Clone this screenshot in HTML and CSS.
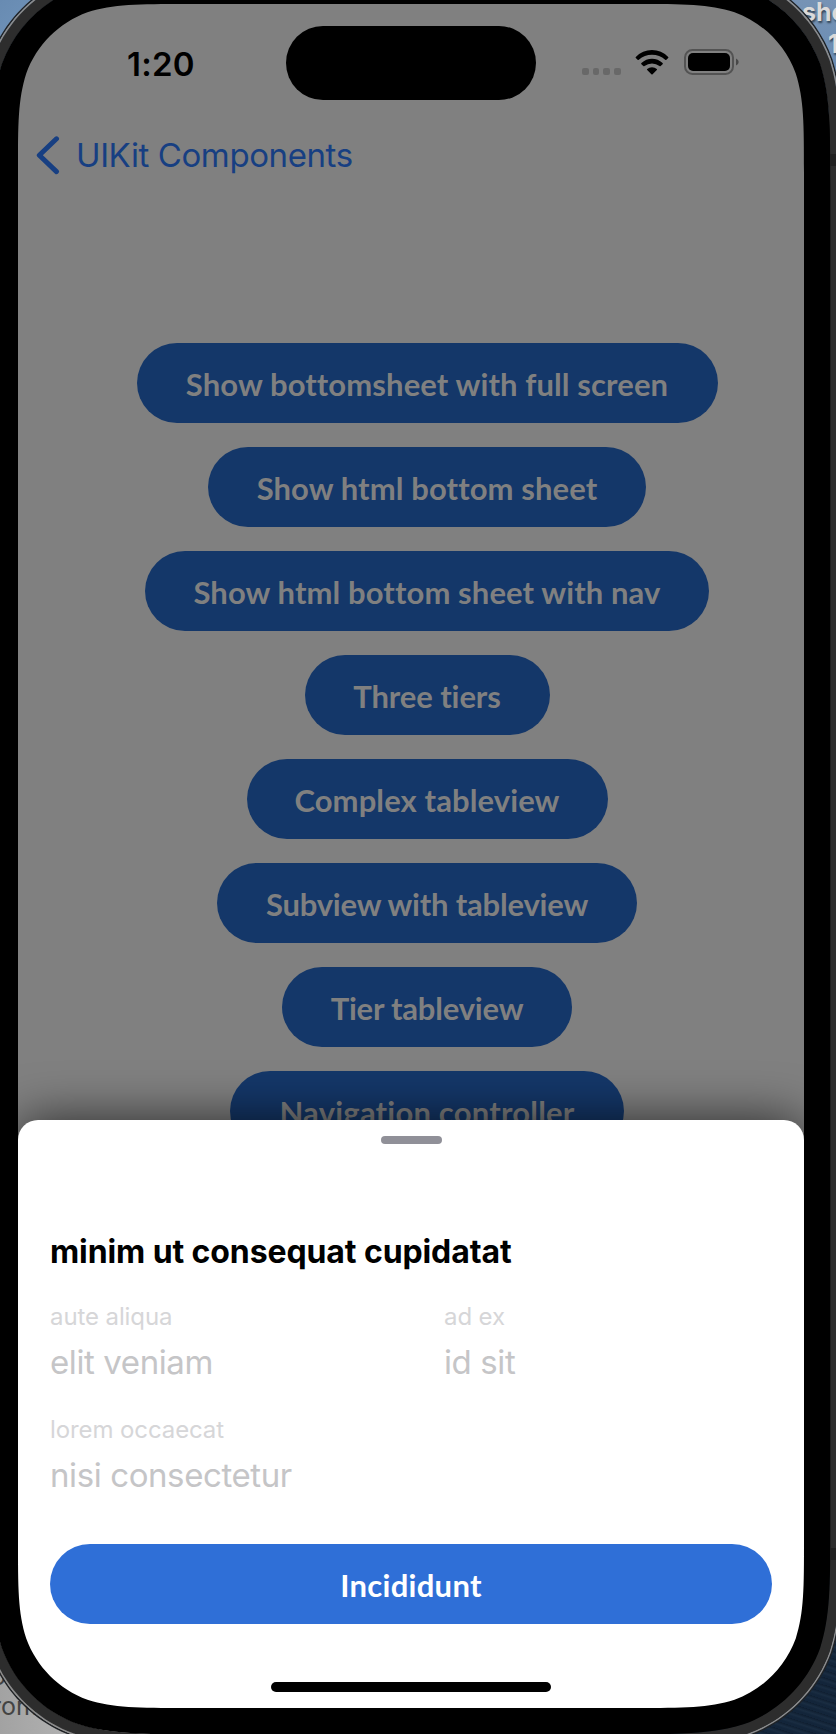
FILE: index.html
```
<!DOCTYPE html>
<html lang="en">
<head>
<meta charset="utf-8">
<title>UIKit Components</title>
<link rel="stylesheet" href="styles.css">
</head>
<body>
<main class="desktop">
  <span class="desk-text desk-shot">sho</span>
  <span class="desk-text desk-number">1</span>
  <span class="desk-text desk-left-top">o</span>
  <span class="desk-text desk-left-bottom">rom.</span>
  <section class="screen">
    <header class="status">
      <time class="clock">1:20</time>
      <div class="island"></div>
      <div class="indicators">
        <div class="dots"><i></i><i></i><i></i><i></i></div>
        <svg class="wifi" viewBox="0 0 34 25" width="34" height="25">
          <path d="M.8 6.9Q7.5 0 17 0T33.2 6.9Q33.7 7.5 33.2 8L31.4 9.8Q30.8 10.3 30.2 9.8Q24.5 4.8 17 4.8T3.8 9.8Q3.2 10.3 2.6 9.8L.8 8Q.3 7.5.8 6.9Z"/>
          <path d="M6.4 13.1Q11 8.8 17 8.8T27.6 13.1Q28.2 13.7 27.6 14.3L25.7 16Q25.1 16.5 24.5 16Q21.2 13.4 17 13.4T9.5 16Q8.9 16.5 8.3 16L6.4 14.3Q5.8 13.7 6.4 13.1Z"/>
          <path d="M12.2 19Q14.2 17.3 17 17.3T21.8 19Q22.4 19.5 21.8 20.1L17.6 24.3Q17 24.8 16.4 24.3L12.2 20.1Q11.6 19.5 12.2 19Z"/>
        </svg>
        <svg class="battery" viewBox="0 0 55 26" width="55" height="26">
          <rect x="1" y="1" width="48" height="24" rx="7.5" fill="none" stroke="#535353" stroke-width="2"/>
          <rect x="4" y="4" width="42" height="18" rx="5" fill="#000"/>
          <path d="M52 9.5Q54.7 10.5 54.7 13T52 16.5Z" fill="#484848"/>
        </svg>
      </div>
    </header>
    <nav class="nav">
      <svg viewBox="0 0 28 40" width="28" height="40"><path d="M22.5 2.8L5.3 19.2L22.5 35.6" fill="none" stroke="#173f82" stroke-width="5" stroke-linecap="round" stroke-linejoin="round"/></svg>
      <span class="back">UIKit Components</span>
    </nav>
    <div class="actions">
      <button class="pill w1">Show bottomsheet with full screen</button>
      <button class="pill w2">Show html bottom sheet</button>
      <button class="pill w3">Show html bottom sheet with nav</button>
      <button class="pill w4">Three tiers</button>
      <button class="pill w5">Complex tableview</button>
      <button class="pill w6">Subview with tableview</button>
      <button class="pill w7">Tier tableview</button>
      <button class="pill w8">Navigation controller</button>
    </div>
    <section class="sheet">
      <div class="grabber"></div>
      <h1 class="title">minim ut consequat cupidatat</h1>
      <dl class="fields">
        <div class="field"><dt>aute aliqua</dt><dd>elit veniam</dd></div>
        <div class="field"><dt>ad ex</dt><dd>id sit</dd></div>
        <div class="field"><dt>lorem occaecat</dt><dd>nisi consectetur</dd></div>
      </dl>
      <button class="primary">Incididunt</button>
      <div class="home"></div>
    </section>
  </section>
  <svg class="bezel" viewBox="0 0 836 1734" width="836" height="1734">
    <g id="frame"></g>
  </svg>
</main>
<script src="frame.js"></script>
</body>
</html>
```
FILE: frame.js
```
// Builds the phone frame from nested continuous-corner rectangles.
const C = [[1.528665, 0], [1.088493, 0], [0.868407, 0], [0.631494, 0.074911],
  [0.372824, 0.169059], [0.16906, 0.372824], [0.074911, 0.631494],
  [0, 0.868407], [0, 1.088493], [0, 1.528665]];

function roundedPath(l, t, r, b, radius) {
  const corner = (x, y, sx, sy, reverse) => {
    const pts = C.map(([a, c]) => `${x + sx * a * radius} ${y + sy * c * radius}`);
    if (reverse) pts.reverse();
    return pts[0] + 'C' + pts.slice(1).join(' ');
  };
  return 'M' + corner(l, t, 1, 1, false) + 'L' + corner(l, b, 1, -1, true) +
    'L' + corner(r, b, -1, -1, false) + 'L' + corner(r, t, -1, 1, true) + 'Z';
}

const inset = (d) => roundedPath(18 - d, 4 - d, 804 + d, 1708 + d, 110 + d);
const ring = (outer, inner, color) =>
  `<path fill-rule="evenodd" fill="${color}" d="${inset(outer)}${inset(inner)}"/>`;

document.getElementById('frame').innerHTML =
  ring(39.5, 38, '#202326') + ring(38, 36.3, '#8c8c8c') +
  ring(36.5, 26, '#2d2d2d') + ring(26.3, 0, '#000') +
  '<path fill="#202020" d="M830 154h6v12h-6zM830 1548h6v12h-6z"/>';
```
FILE: styles.css
```
* { box-sizing: border-box; }
body { margin: 0; font-family: Inter, "Liberation Sans", sans-serif; }
button { border: 0; padding: 0; font-family: Lato, "Liberation Sans", sans-serif; font-weight: 700; font-variant-ligatures: none; }
.desktop {
  position: relative; width: 836px; height: 1734px; overflow: hidden; padding: 4px 32px 26px 18px;
  background:
    linear-gradient(135deg, #688bb2, #7fa3c8) 0 0 / 100px 100px no-repeat,
    linear-gradient(#7693b5, #6288b3) 100% 0 / 120px 120px no-repeat,
    linear-gradient(90deg, #a2a2a2, #c4c4c4) 0 100% / 150px 200px no-repeat,
    repeating-linear-gradient(18deg, #13253a 0 2px, #1a2d42 4px, #0f1e30 7px) 100% 100% / 200px 200px no-repeat,
    #000;
}
.desk-text { position: absolute; font-weight: 700; font-size: 25px; line-height: 30px; color: #dadada; text-shadow: 1px 2px 2px #345; }
.desk-shot { left: 802px; top: -3px; }
.desk-number { left: 828px; top: 29px; }
.desk-left-top, .desk-left-bottom { color: #444; font-weight: 400; text-shadow: none; }
.desk-left-top { left: -9px; top: 1661px; }
.desk-left-bottom { left: -8px; top: 1691px; }
.screen { position: relative; width: 786px; height: 1704px; border-radius: 70px; background: #808080; overflow: hidden; }
.bezel { position: absolute; left: 0; top: 0; }

.status { display: flex; align-items: flex-start; height: 112px; padding-top: 22px; }
.clock { width: 268px; padding: 18px 0 0 109px; font-size: 33px; line-height: 40px; font-weight: 600; letter-spacing: .2px; }
.island { width: 250px; height: 74px; border-radius: 37px; background: #000; }
.indicators { display: flex; padding: 23px 0 0 46px; }
.dots { display: flex; gap: 4px; padding-top: 19px; }
.dots i { width: 6.7px; height: 7px; border-radius: 2px; background: #686868; }
.wifi { margin: 1px 0 0 14px; }
.battery { margin-left: 15px; }
.nav { display: flex; align-items: center; height: 80px; padding: 0 0 0 16px; gap: 14px; }
.back { padding-bottom: 2px; font-size: 33px; color: #173f82; letter-spacing: -.4px; white-space: nowrap; }

.actions { display: flex; flex-direction: column; align-items: center; gap: 24px; padding: 147px 0 0 32px; }
.pill { flex: none; height: 80px; border-radius: 40px; background: #143769; color: #808080; font-size: 31px; line-height: 80px; padding-top: 1px; letter-spacing: .1px; white-space: nowrap; }
.w1 { width: 581px; } .w2 { width: 438px; } .w3 { width: 564px; } .w4 { width: 245px; letter-spacing: -.1px; }
.w5 { width: 361px; } .w6 { width: 420px; letter-spacing: -.2px; } .w7 { width: 290px; letter-spacing: -.2px; } .w8 { width: 394px; letter-spacing: .2px; }

.sheet { position: absolute; left: 0; right: 0; bottom: 0; height: 588px; padding: 16px 32px; border-radius: 20px 20px 0 0; background: #fff; box-shadow: 0 0 50px rgba(0,0,0,.68); display: flex; flex-direction: column; }
.grabber { align-self: center; width: 61px; height: 8px; border-radius: 4px; background: #909098; }
.title { margin: 88px 0 0; font-size: 32px; line-height: 40px; font-weight: 700; letter-spacing: -.1px; white-space: nowrap; }
.fields { display: grid; grid-template-columns: 394px 1fr; row-gap: 27px; margin: 30px 0 0; }
.field { height: 86px; }
.field dt { font-size: 24px; line-height: 30px; color: #d6d6d8; letter-spacing: -.1px; white-space: nowrap; }
.field dd { margin: 10px 0 0; font-size: 33px; line-height: 40px; color: #c5c5c7; letter-spacing: -.4px; white-space: nowrap; }
.primary { flex: none; margin-top: 43px; height: 80px; border-radius: 40px; background: #2f6fd7; color: #fff; font-size: 31px; line-height: 80px; padding-top: 1px; letter-spacing: .3px; }
.home { flex: none; align-self: center; width: 280px; height: 10px; border-radius: 5px; background: #000; margin-top: 58px; }
```
